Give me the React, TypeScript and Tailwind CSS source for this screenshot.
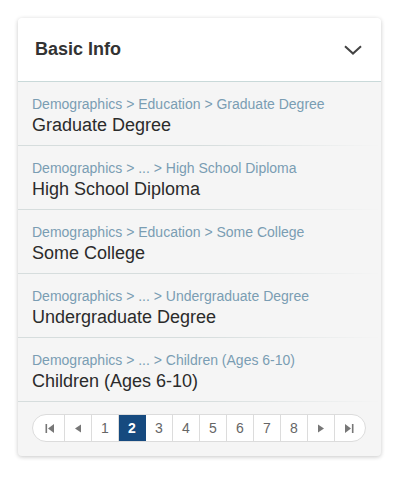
const rows = [
  { path: "Demographics > Education > Graduate Degree", title: "Graduate Degree" },
  { path: "Demographics > ... > High School Diploma", title: "High School Diploma" },
  { path: "Demographics > Education > Some College", title: "Some College" },
  { path: "Demographics > ... > Undergraduate Degree", title: "Undergraduate Degree" },
  { path: "Demographics > ... > Children (Ages 6-10)", title: "Children (Ages 6-10)" },
];

const pages = [1, 2, 3, 4, 5, 6, 7, 8];

function Tri({ dir, bar }: { dir: "left" | "right"; bar?: boolean }) {
  return (
    <svg width="10" height="9" viewBox="0 0 10 9" fill="#777">
      {dir === "left" ? (
        <>
          {bar && <rect x="0.5" y="0" width="1.6" height="9" />}
          <polygon points={bar ? "9,0 9,9 3,4.5" : "8,0.5 8,8.5 2,4.5"} />
        </>
      ) : (
        <>
          <polygon points={bar ? "1,0 1,9 7,4.5" : "2,0.5 2,8.5 8,4.5"} />
          {bar && <rect x="7.9" y="0" width="1.6" height="9" />}
        </>
      )}
    </svg>
  );
}

export default function App() {
  return (
    <div className="w-[399px] h-[478px] bg-white pt-[18px] pl-[18px] font-['Liberation_Sans',Arial,sans-serif]">
      <div className="w-[363px] rounded-[4px] bg-[#f5f5f5] shadow-[0_1px_4px_rgba(0,0,0,0.22)] overflow-hidden">
        <div className="h-[64px] bg-white border-b border-[#c9d9d9] flex items-center justify-between pl-[17px] pr-[19px]">
          <span className="text-[18px] font-bold text-[#333]">Basic Info</span>
          <svg width="18" height="10" viewBox="0 0 18 10" fill="none">
            <path d="M1 1.2 L9 8.6 L17 1.2" stroke="#444" strokeWidth="2" />
          </svg>
        </div>
        {rows.map((r) => (
          <div key={r.title}>
            <div className="h-[63px] px-[14px] pt-[13px]">
              <div className="text-[14px] leading-[18px] text-[#7a9db3]">{r.path}</div>
              <div className="text-[18px] leading-[25px] text-[#2b2b2b]">{r.title}</div>
            </div>
            <div className="h-px w-full bg-gradient-to-r from-[#d6dddd] from-50% to-transparent" />
          </div>
        ))}
        <div className="px-[14px] pt-[12px] pb-[14px]">
          <div className="flex w-[334px] h-[28px] rounded-full border border-[#dcdcdc] bg-white overflow-hidden text-[14px] text-[#666]">
            <div className="w-[32px] flex items-center justify-center pl-[3px] border-r border-[#dcdcdc]">
              <Tri dir="left" bar />
            </div>
            <div className="w-[27px] flex items-center justify-center border-r border-[#dcdcdc]">
              <Tri dir="left" />
            </div>
            {pages.map((p) => (
              <div
                key={p}
                className={
                  p === 2
                    ? "w-[27px] flex items-center justify-center bg-[#164a7f] text-white font-bold border-r border-[#164a7f]"
                    : "w-[27px] flex items-center justify-center border-r border-[#dcdcdc]"
                }
              >
                {p}
              </div>
            ))}
            <div className="w-[27px] flex items-center justify-center border-r border-[#dcdcdc]">
              <Tri dir="right" />
            </div>
            <div className="flex-1 flex items-center justify-center pr-[3px]">
              <Tri dir="right" bar />
            </div>
          </div>
        </div>
      </div>
    </div>
  );
}
